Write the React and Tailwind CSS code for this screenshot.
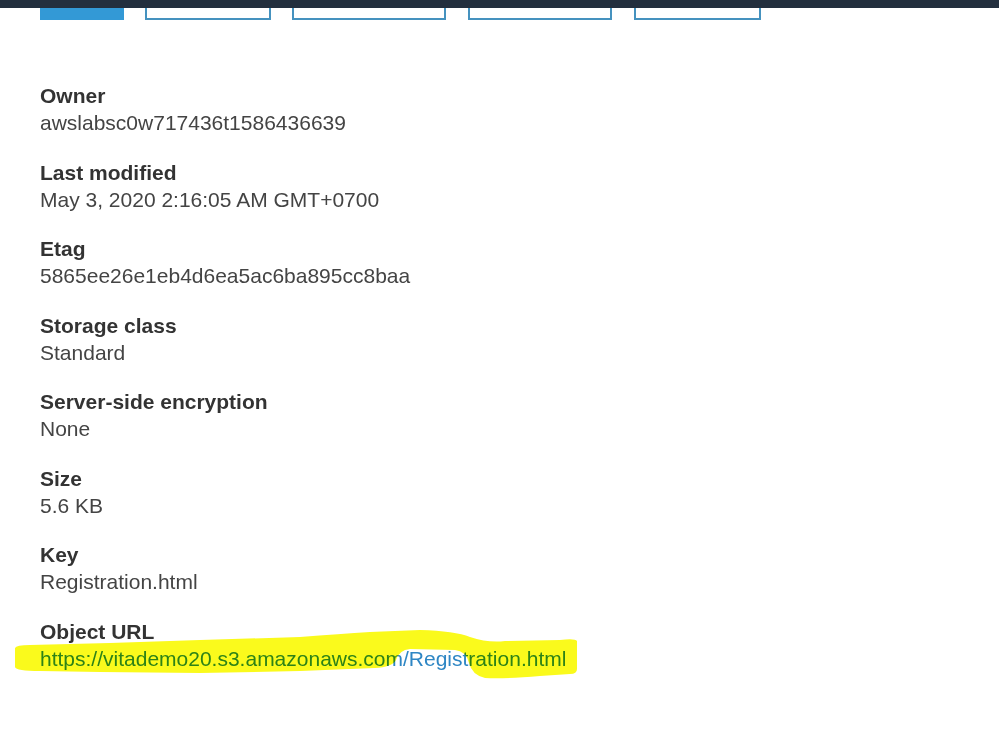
import React from "react";

const rows = [
  ["Owner", "awslabsc0w717436t1586436639"],
  ["Last modified", "May 3, 2020 2:16:05 AM GMT+0700"],
  ["Etag", "5865ee26e1eb4d6ea5ac6ba895cc8baa"],
  ["Storage class", "Standard"],
  ["Server-side encryption", "None"],
  ["Size", "5.6 KB"],
  ["Key", "Registration.html"],
];

export default function App() {
  return (
    <div
      className="relative w-[999px] h-[755px] overflow-hidden bg-white"
      style={{ fontFamily: '"Liberation Sans", Arial, sans-serif' }}
    >
      <div className="h-[8px] bg-[#232f3e]" />
      <div className="flex h-[12px] pl-[40px]">
        <div className="w-[84px] h-full bg-[#3399d6]" />
        <div className="ml-[21px] w-[126px] h-full border-x-2 border-b-2 border-[#4592bf]" />
        <div className="ml-[21px] w-[154px] h-full border-x-2 border-b-2 border-[#4592bf]" />
        <div className="ml-[22px] w-[144px] h-full border-x-2 border-b-2 border-[#4592bf]" />
        <div className="ml-[22px] w-[127px] h-full border-x-2 border-b-2 border-[#4592bf]" />
      </div>
      <div className="pl-[40px] pt-[62px] flex flex-col gap-[22.5px] text-[21px] leading-[27px]">
        {rows.map(([k, v]) => (
          <div key={k}>
            <div className="font-bold text-[#333333]">{k}</div>
            <div className="text-[#444444]">{v}</div>
          </div>
        ))}
        <div>
          <div className="font-bold text-[#333333]">Object URL</div>
          <div className="text-[#2e86c4]">https://vitademo20.s3.amazonaws.com/Registration.html</div>
        </div>
      </div>
      <svg
        className="absolute left-0 top-0 mix-blend-multiply pointer-events-none"
        width="600"
        height="700"
        viewBox="0 0 600 700"
      >
        <path
          fill="#fafa1c"
          d="M15 648 Q16 645 30 645 L110 643 L200 640 L300 637 Q340 634 370 632 L420 630 Q455 631 470 637 Q488 643 505 641 L560 640 Q575 638 577 641 L577 669 Q577 674 570 674 L540 676 Q505 679 485 678 Q472 675 469 663 Q466 651 455 650 L410 649 Q399 650 396 660 Q392 667 375 668 L300 671 L200 673 L100 672 L40 671 Q16 671 15 667 Z"
        />
      </svg>
    </div>
  );
}
